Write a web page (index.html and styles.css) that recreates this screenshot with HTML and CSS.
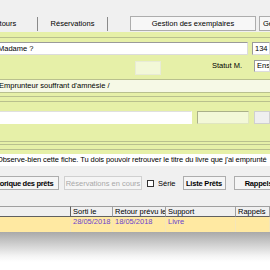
FILE: index.html
```html
<!DOCTYPE html>
<html lang="fr">
<head>
<meta charset="UTF-8">
<title>Fiche emprunteur</title>
<link rel="stylesheet" href="styles.css">
</head>
<body>
<div class="screen">

  <div class="tabs">
    <div class="tab first">Retours</div>
    <div class="tab second">Réservations</div>
    <div class="tab current">Gestion des exemplaires</div>
    <div class="tab current last">Gestion</div>
  </div>

  <div class="form">
    <div class="gap g5"></div>
    <div class="rule"></div>
    <div class="gap g4"></div>

    <div class="row r-name">
      <div class="field name">Madame ?</div>
      <div class="field num">134</div>
    </div>

    <div class="row r-status">
      <div class="field small"></div>
      <span class="label">Statut M.</span>
      <div class="field ens">Ens</div>
    </div>

    <div class="rule"></div>
    <div class="note">Emprunteur souffrant d'amnésie /</div>
    <div class="rule"></div>
    <div class="gap g3"></div>
    <div class="rule"></div>
    <div class="gap g4"></div>
    <div class="rule"></div>
    <div class="gap g9"></div>

    <div class="row r-search">
      <div class="field wide"></div>
      <div class="field pale"></div>
      <div class="field grey"></div>
    </div>

    <div class="gap g17"></div>
    <div class="rule"></div>
    <div class="gap g2"></div>
    <div class="rule"></div>
    <div class="gap g4"></div>
    <div class="rule"></div>
    <div class="gap g4"></div>
    <div class="message">Observe-bien cette fiche. Tu dois pouvoir retrouver le titre du livre que j'ai emprunté</div>
  </div>

  <div class="toolbar">
    <button class="btn hist">Historique des prêts</button>
    <button class="btn off">Réservations en cours</button>
    <label class="check"><span class="box"></span>Série</label>
    <button class="btn list">Liste Prêts</button>
    <button class="btn recall">Rappels</button>
  </div>

  <div class="grid">
    <div class="head"></div>
    <div class="head">Sorti le</div>
    <div class="head">Retour prévu le</div>
    <div class="head">Support</div>
    <div class="head">Rappels</div>

    <div class="cell"></div>
    <div class="cell">28/05/2018</div>
    <div class="cell">18/05/2018</div>
    <div class="cell">Livre</div>
    <div class="cell"></div>
  </div>
  <div class="shade"></div>

</div>
</body>
</html>
```

FILE: styles.css
```css
body {
  margin: 0;
  background: #fff;
  font-family: 'Liberation Sans', Arial, sans-serif;
  font-size: 7.5px;
  color: #000;
  overflow: hidden;
}

.screen {
  width: 270px;
  height: 270px;
  overflow: hidden;
}

/* onglets */
.tabs {
  height: 32px;
  display: flex;
  align-items: flex-end;
  background: #f0f0f0;
  padding-bottom: 1px;
  box-sizing: border-box;
}

.tab {
  height: 14px;
  line-height: 14px;
  white-space: nowrap;
  flex: none;
}

.tab.first {
  width: 47px;
  margin-left: -10px;
  border-right: 1px solid #8a8a8a;
}

.tab.second {
  width: 69px;
  text-align: center;
  border-right: 1px solid #8a8a8a;
}

.tab.current {
  width: 124px;
  margin-left: 22px;
  text-align: center;
  border: 1px solid #adadad;
  background: #f7f7f7;
  height: 13px;
  line-height: 13px;
}

.tab.last {
  margin-left: 3px;
  text-align: left;
  padding-left: 3px;
}

/* fiche */
.form {
  background: #e6f0a8;
}

.gap { height: 4px; }
.g2 { height: 2px; }
.g3 { height: 3px; }
.g4 { height: 4px; }
.g5 { height: 5px; }
.g9 { height: 9px; }
.g17 { height: 17px; }

.rule {
  height: 1px;
  background: #b9c08e;
}

.row {
  display: flex;
  align-items: flex-start;
}

.field {
  box-sizing: border-box;
  background: #fff;
  border: 1px solid #9a9a9a;
  border-right-color: #dcdcdc;
  border-bottom-color: #dcdcdc;
  padding-left: 2px;
  white-space: nowrap;
  overflow: hidden;
}

.r-name {
  height: 14px;
}

.field.name {
  width: 252px;
  margin-left: -4px;
  padding-left: 1px;
  height: 13px;
  line-height: 11px;
}

.field.num {
  margin-left: 4px;
  flex: 1;
  height: 13px;
  line-height: 11px;
}

.r-status {
  height: 23px;
}

.field.small {
  margin-left: 135px;
  margin-top: 5px;
  width: 26px;
  height: 14px;
  background: #f3f8d8;
  border-color: #e8ebd6;
}

.label {
  margin-left: 51px;
  margin-top: 5px;
  line-height: 9px;
}

.field.ens {
  margin-left: 12px;
  margin-top: 4px;
  flex: 1;
  height: 12px;
  line-height: 10px;
}

.note {
  height: 12px;
  line-height: 12px;
  background: #f6f9e6;
  margin-left: -1px;
  white-space: nowrap;
}

.r-search {
  height: 13px;
}

.field.wide {
  width: 194px;
  height: 13px;
  margin-left: -2px;
  border-color: #fff;
  border-top-color: #e0e0e0;
}

.field.pale {
  width: 52px;
  height: 13px;
  margin-left: 5px;
  background: #f3f8d8;
  border-color: #aab08a;
  border-right-color: #e0e6c0;
  border-bottom-color: #e0e6c0;
}

.field.grey {
  flex: 1;
  height: 13px;
  margin-left: 5px;
  background: #efefef;
  border-color: #d0d0d0;
}

.message {
  height: 12px;
  line-height: 12px;
  background: #fff;
  margin-left: -3px;
  letter-spacing: -0.08px;
  white-space: nowrap;
}

/* barre de boutons */
.toolbar {
  height: 40px;
  background: #f0f0f0;
  display: flex;
  align-items: flex-start;
  padding-top: 10px;
  box-sizing: border-box;
}

.btn {
  font: inherit;
  height: 14px;
  padding: 0;
  margin: 0;
  background: #f5f5f5;
  border: 1px solid #adadad;
  white-space: nowrap;
  flex: none;
  color: #000;
}

.btn.hist {
  width: 78px;
  margin-left: -19px;
  font-weight: bold;
  letter-spacing: -0.3px;
}

.btn.off {
  width: 78px;
  margin-left: 5px;
  color: #a8a8a8;
  border-color: #d0d0d0;
}

.check {
  display: flex;
  align-items: center;
  margin-left: 5px;
  height: 14px;
  white-space: nowrap;
}

.box {
  width: 5px;
  height: 5px;
  border: 1px solid #333;
  background: #fff;
  margin-right: 4px;
}

.btn.list {
  width: 43px;
  margin-left: 7px;
  font-weight: bold;
  letter-spacing: -0.2px;
}

.btn.recall {
  width: 50px;
  margin-left: 8px;
  font-weight: bold;
  letter-spacing: -0.2px;
}

/* tableau */
.grid {
  display: grid;
  grid-template-columns: 71px 42px 53px 70px 1fr;
  background: #f0f0f0;
}

.head {
  height: 11px;
  line-height: 10px;
  padding-left: 2px;
  border-top: 1px solid #a0a0a0;
  border-right: 1px solid #a0a0a0;
  border-bottom: 1px solid #606060;
  white-space: nowrap;
  overflow: hidden;
  box-sizing: border-box;
  background: #f0f0f0;
}

.head:first-child {
  border-right-color: #606060;
}

.cell {
  height: 15px;
  line-height: 10px;
  padding-left: 2px;
  background: #ffe9a2;
  border-right: 1px solid #f5e6b8;
  color: #6b42cf;
  white-space: nowrap;
  overflow: hidden;
}

.shade {
  height: 30px;
  background: linear-gradient(#a9a9a9, #f4f4f4 80%, #fff);
}
```
